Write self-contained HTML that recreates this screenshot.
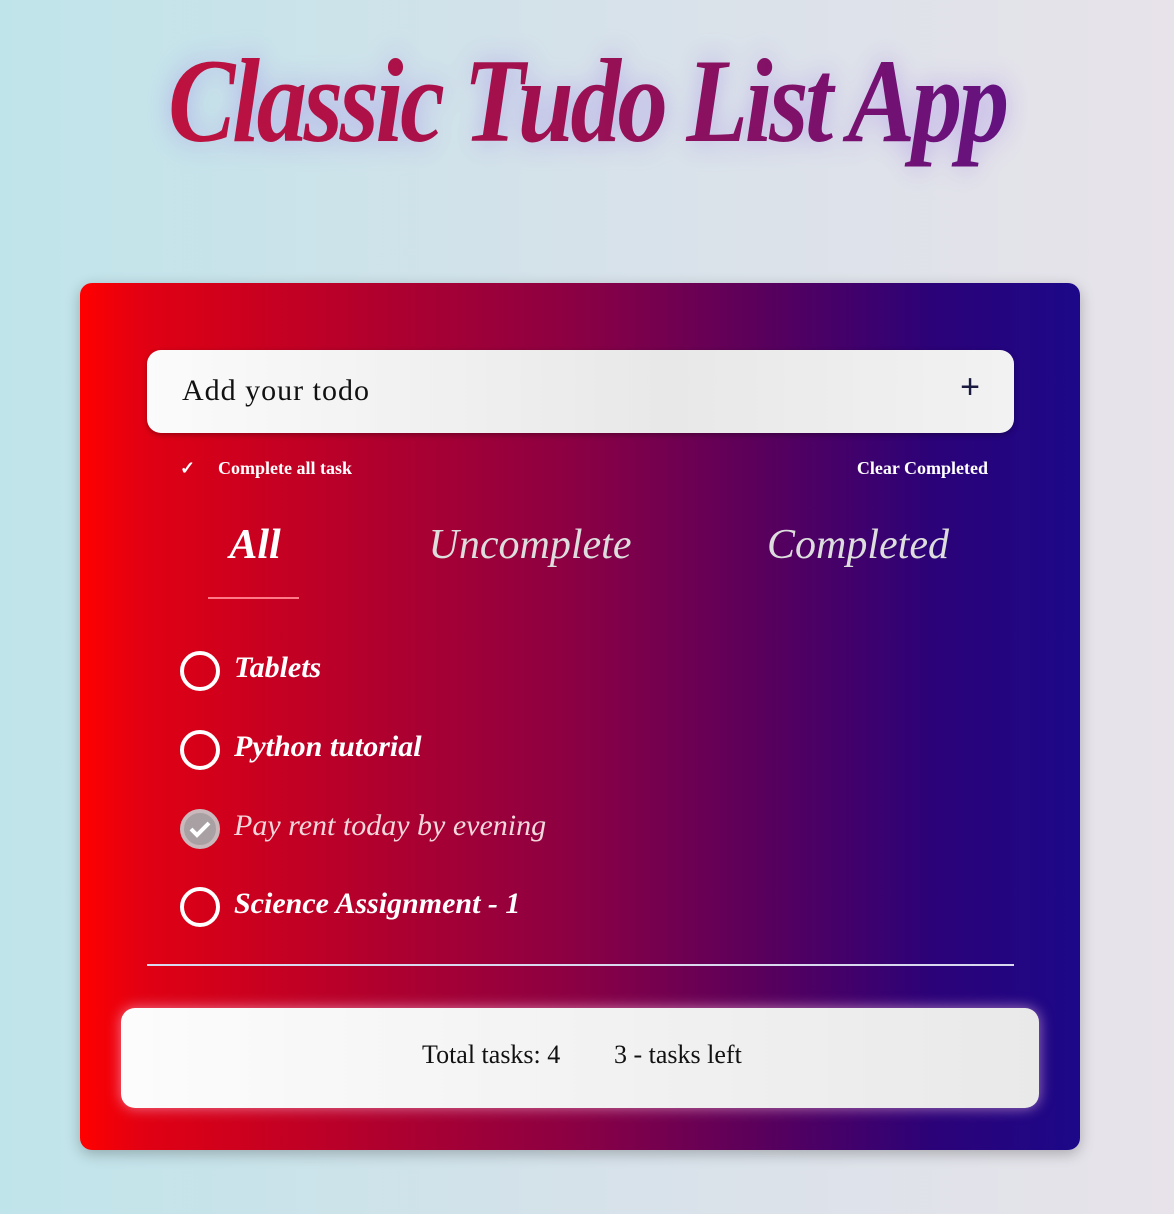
<!DOCTYPE html>
<html><head><meta charset="utf-8"><style>
*{margin:0;padding:0;box-sizing:border-box}
body{width:1174px;height:1214px;overflow:hidden;background:linear-gradient(90deg,#bfe4ea 0%,#d6e2ea 50%,#e8e3ea 100%);font-family:"Liberation Serif",serif;position:relative}
.title{position:absolute;left:0;width:1174px;top:32px;text-align:center;font-size:120px;font-weight:bold;font-style:italic;letter-spacing:-4px;transform:scaleX(0.84);transform-origin:587px 0;background:linear-gradient(90deg,#c4123c 0%,#a0104e 45%,#5a1288 100%);-webkit-background-clip:text;background-clip:text;color:transparent;filter:drop-shadow(0 0 14px rgba(150,110,230,.45))}
.card{position:absolute;left:80px;top:283px;width:1000px;height:867px;border-radius:12px;background:linear-gradient(90deg,#ff0000 0%,#e20012 6%,#b0002e 30%,#8a0044 50%,#5a005c 68%,#2c0278 85%,#1c0888 100%);box-shadow:0 4px 14px rgba(0,0,0,.25)}
.input{position:absolute;left:67px;top:67px;width:867px;height:83px;border-radius:14px;background:linear-gradient(90deg,#fbfbfb,#e8e8e8 60%,#f2f2f2);box-shadow:0 2px 6px rgba(0,0,0,.3)}
.input span{position:absolute;left:35px;top:24px;font-size:30px;color:#111;letter-spacing:1px}
.input b{position:absolute;right:34px;top:18px;font-size:34px;color:#1a1a40;font-family:"Liberation Sans",sans-serif;font-weight:normal}
.sm{position:absolute;top:175px;color:#fff;font-size:18px;font-weight:bold}
.tab{position:absolute;top:238px;font-size:42px;font-style:italic;text-align:center;width:240px}
.ul{position:absolute;left:128px;top:314px;width:91px;height:2px;background:#ff7a86}
.it{position:absolute;left:100px;width:40px;height:40px;border:4px solid #fff;border-radius:50%}
.tx{position:absolute;left:154px;font-size:30px;font-style:italic;color:#fff;font-weight:bold}
.line{position:absolute;left:67px;top:681px;width:867px;height:2px;background:#d8d8ee}
.foot{position:absolute;left:41px;top:725px;width:918px;height:100px;border-radius:14px;background:linear-gradient(90deg,#fcfcfc,#e9e9e9);box-shadow:0 0 14px rgba(255,200,230,.6)}
.foot span{position:absolute;top:32px;font-size:26px;color:#111}
</style></head><body>
<div class="title">Classic Tudo List App</div>
<div class="card">
<div class="input"><span>Add your todo</span><b>+</b></div>
<div class="sm" style="left:100px">✓</div>
<div class="sm" style="left:138px">Complete all task</div>
<div class="sm" style="right:92px">Clear Completed</div>
<div class="tab" style="left:55px;color:#fff;font-weight:bold">All</div>
<div class="tab" style="left:330px;color:#ddd">Uncomplete</div>
<div class="tab" style="left:658px;color:#ddd">Completed</div>
<div class="ul"></div>
<div class="it" style="top:368px"></div><div class="tx" style="top:368px">Tablets</div>
<div class="it" style="top:447px"></div><div class="tx" style="top:447px">Python tutorial</div>
<div class="it" style="top:526px;background:#a9a0a3;border-color:#c9b9bc"><svg width="32" height="32" viewBox="0 0 32 32" style="position:absolute;left:0;top:0"><path d="M7 16 L13 22 L25 10" stroke="#fff" stroke-width="4" fill="none"/></svg></div><div class="tx" style="top:526px;font-weight:normal;color:#f2d8dc">Pay rent today by evening</div>
<div class="it" style="top:604px"></div><div class="tx" style="top:604px">Science Assignment - 1</div>
<div class="line"></div>
<div class="foot"><span style="left:301px">Total tasks: 4</span><span style="left:493px">3 - tasks left</span></div>
</div>
</body></html>
